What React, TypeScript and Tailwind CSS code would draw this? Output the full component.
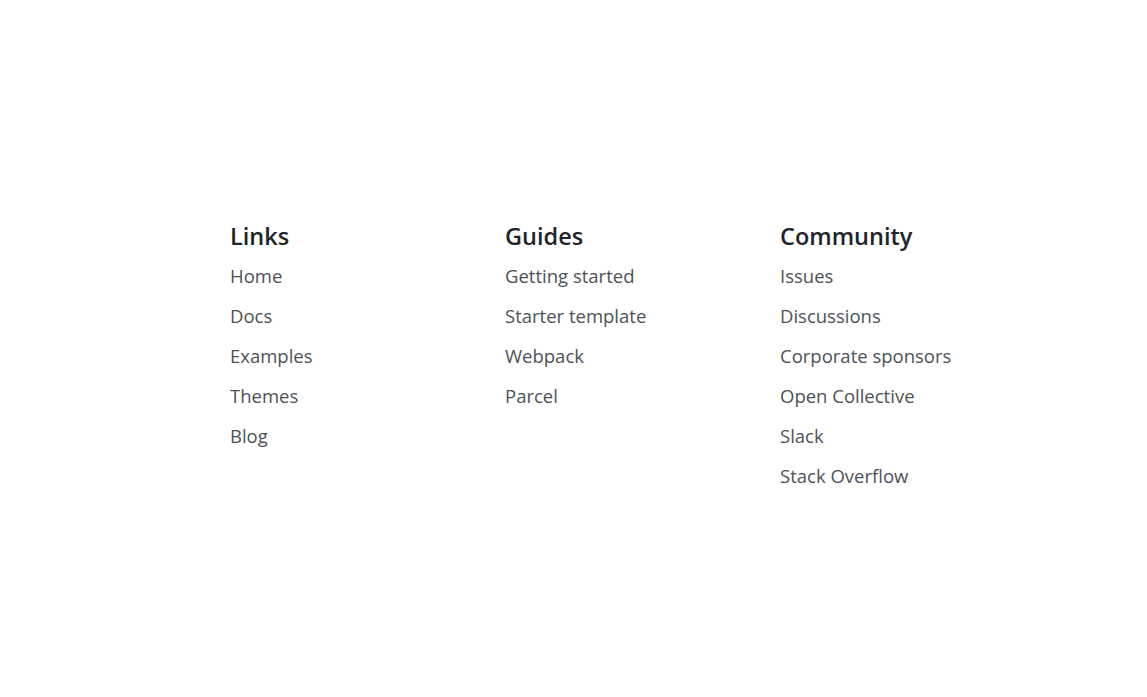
export default function App() {
  const cols = [
    { title: "Links", items: ["Home", "Docs", "Examples", "Themes", "Blog"] },
    { title: "Guides", items: ["Getting started", "Starter template", "Webpack", "Parcel"] },
    { title: "Community", items: ["Issues", "Discussions", "Corporate sponsors", "Open Collective", "Slack", "Stack Overflow"] },
  ];
  return (
    <div className="min-h-[697px] w-full bg-white" style={{ fontFamily: '"Open Sans", "Noto Sans", sans-serif' }}>
      <div className="flex pl-[230px] pt-[222px]">
        {cols.map((c) => (
          <div key={c.title} className="w-[275px]">
            <h5 className="text-[23.5px] leading-[28px] font-semibold text-[#212529] mb-[6px]">{c.title}</h5>
            <ul>
              {c.items.map((i) => (
                <li key={i} className="text-[18.5px] leading-[40px] text-[#4d5257]">{i}</li>
              ))}
            </ul>
          </div>
        ))}
      </div>
    </div>
  );
}
